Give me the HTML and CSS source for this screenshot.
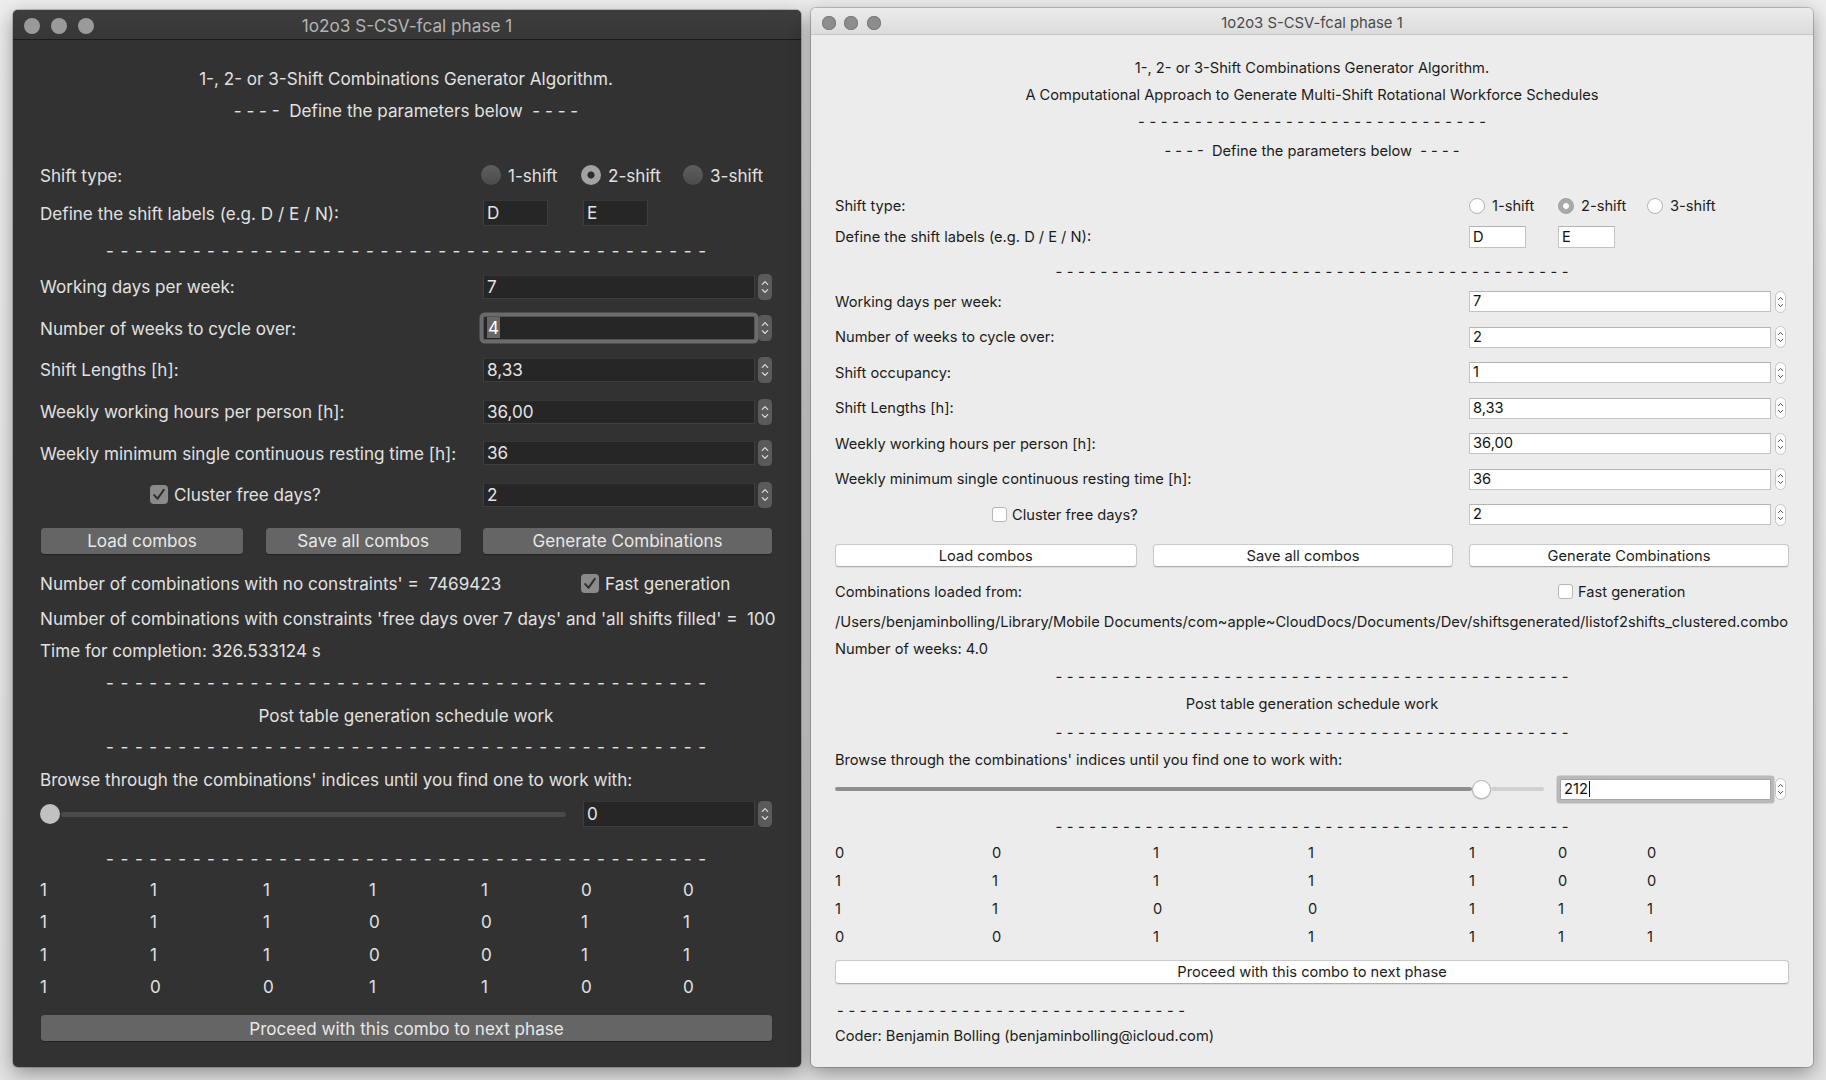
FILE: index.html
```html
<!DOCTYPE html>
<html>
<head>
<meta charset="utf-8">
<title>1o2o3 S-CSV-fcal phase 1</title>
<link rel="stylesheet" href="styles.css">
</head>
<body>
<svg class="defs" width="0" height="0" aria-hidden="true">
  <symbol id="step-dark" viewBox="0 0 14 26">
    <rect x="0" y="0" width="14" height="26" rx="4.5" fill="#5a5a5a"/>
    <path d="M4.3 10.4 L7 7.6 L9.7 10.4" fill="none" stroke="#d8d8d8" stroke-width="1.3" stroke-linecap="round" stroke-linejoin="round"/>
    <path d="M4.3 15.6 L7 18.4 L9.7 15.6" fill="none" stroke="#d8d8d8" stroke-width="1.3" stroke-linecap="round" stroke-linejoin="round"/>
  </symbol>
  <symbol id="step-light" viewBox="0 0 11 22">
    <rect x="0.5" y="0.5" width="10" height="21" rx="5" fill="#ffffff" stroke="#c4c4c4"/>
    <path d="M3.4 8.6 L5.5 6.4 L7.6 8.6" fill="none" stroke="#505050" stroke-width="1" stroke-linecap="round" stroke-linejoin="round"/>
    <path d="M3.4 13.4 L5.5 15.6 L7.6 13.4" fill="none" stroke="#505050" stroke-width="1" stroke-linecap="round" stroke-linejoin="round"/>
  </symbol>
  <symbol id="tick" viewBox="0 0 18 18">
    <path d="M4.2 9.6 L7.6 13.2 L13.8 4.4" fill="none" stroke="#2e2e2e" stroke-width="2" stroke-linecap="round" stroke-linejoin="round"/>
  </symbol>
</svg>

<div class="desktop">

  <!-- Dark window -->
  <section class="win dark">
    <header class="titlebar">
      <div class="lights"><span class="dot"></span><span class="dot"></span><span class="dot"></span></div>
      <div class="title">1o2o3 S-CSV-fcal phase 1</div>
      <div></div>
    </header>
    <div class="content">
      <div class="row center r-h1">1-, 2- or 3-Shift Combinations Generator Algorithm.</div>
      <div class="row center r-h2 pre">- - - -  Define the parameters below  - - - -</div>

      <div class="grid r-shift">
        <span class="lab">Shift type:</span>
        <label class="radio c5"><span class="rb"></span>1-shift</label>
        <label class="radio c6"><span class="rb on"></span>2-shift</label>
        <label class="radio c7"><span class="rb"></span>3-shift</label>
      </div>
      <div class="grid r-labels">
        <span class="lab">Define the shift labels (e.g. D / E / N):</span>
        <div class="field small c5">D</div>
        <div class="field small c6">E</div>
      </div>
      <div class="row center r-dash1"><span class="dashline">- - - - - - - - - - - - - - - - - - - - - - - - - - - - - - - - - - - - - - - - - -</span></div>

      <div class="grid spinrow"><span class="lab">Working days per week:</span><div class="spin"><div class="field">7</div><svg class="stepper"><use href="#step-dark"/></svg></div></div>
      <div class="grid spinrow"><span class="lab">Number of weeks to cycle over:</span><div class="spin"><div class="field focus"><span class="sel">4</span></div><svg class="stepper"><use href="#step-dark"/></svg></div></div>
      <div class="grid spinrow"><span class="lab">Shift Lengths [h]:</span><div class="spin"><div class="field">8,33</div><svg class="stepper"><use href="#step-dark"/></svg></div></div>
      <div class="grid spinrow"><span class="lab">Weekly working hours per person [h]:</span><div class="spin"><div class="field">36,00</div><svg class="stepper"><use href="#step-dark"/></svg></div></div>
      <div class="grid spinrow"><span class="lab">Weekly minimum single continuous resting time [h]:</span><div class="spin"><div class="field">36</div><svg class="stepper"><use href="#step-dark"/></svg></div></div>
      <div class="grid spinrow">
        <label class="check c2"><span class="cb on"><svg><use href="#tick"/></svg></span>Cluster free days?</label>
        <div class="spin"><div class="field">2</div><svg class="stepper"><use href="#step-dark"/></svg></div>
      </div>

      <div class="grid r-btns">
        <div class="btn b-load">Load combos</div>
        <div class="btn b-save">Save all combos</div>
        <div class="btn b-gen">Generate Combinations</div>
      </div>

      <div class="grid r-info1">
        <span class="lab pre">Number of combinations with no constraints' =  7469423</span>
        <label class="check c6"><span class="cb on"><svg><use href="#tick"/></svg></span>Fast generation</label>
      </div>
      <div class="row r-info2 pre">Number of combinations with constraints 'free days over 7 days' and 'all shifts filled' =  100</div>
      <div class="row r-info3">Time for completion: 326.533124 s</div>
      <div class="row center r-dash2"><span class="dashline">- - - - - - - - - - - - - - - - - - - - - - - - - - - - - - - - - - - - - - - - - -</span></div>
      <div class="row center r-post">Post table generation schedule work</div>
      <div class="row center r-dash3"><span class="dashline">- - - - - - - - - - - - - - - - - - - - - - - - - - - - - - - - - - - - - - - - - -</span></div>
      <div class="row r-browse">Browse through the combinations' indices until you find one to work with:</div>
      <div class="grid r-slider">
        <div class="slider"><span class="knob"></span><span class="track"></span></div>
        <div class="spin s67"><div class="field">0</div><svg class="stepper"><use href="#step-dark"/></svg></div>
      </div>
      <div class="row center r-dash4"><span class="dashline">- - - - - - - - - - - - - - - - - - - - - - - - - - - - - - - - - - - - - - - - - -</span></div>

      <div class="table">
        <div class="grid trow"><span>1</span><span>1</span><span>1</span><span>1</span><span>1</span><span>0</span><span>0</span></div>
        <div class="grid trow"><span>1</span><span>1</span><span>1</span><span>0</span><span>0</span><span>1</span><span>1</span></div>
        <div class="grid trow"><span>1</span><span>1</span><span>1</span><span>0</span><span>0</span><span>1</span><span>1</span></div>
        <div class="grid trow"><span>1</span><span>0</span><span>0</span><span>1</span><span>1</span><span>0</span><span>0</span></div>
      </div>

      <div class="btn b-proceed">Proceed with this combo to next phase</div>
    </div>
  </section>

  <!-- Light window -->
  <section class="win lightwin">
    <header class="titlebar">
      <div class="lights"><span class="dot"></span><span class="dot"></span><span class="dot"></span></div>
      <div class="title">1o2o3 S-CSV-fcal phase 1</div>
      <div></div>
    </header>
    <div class="content">
      <div class="row center r-h1">1-, 2- or 3-Shift Combinations Generator Algorithm.</div>
      <div class="row center r-h2">A Computational Approach to Generate Multi-Shift Rotational Workforce Schedules</div>
      <div class="row center r-dash0"><span class="dashline short">- - - - - - - - - - - - - - - - - - - - - - - - - - - - - - -</span></div>
      <div class="row center r-define pre">- - - -  Define the parameters below  - - - -</div>

      <div class="grid r-shift">
        <span class="lab">Shift type:</span>
        <label class="radio c5"><span class="rb"></span>1-shift</label>
        <label class="radio c6"><span class="rb on"></span>2-shift</label>
        <label class="radio c7"><span class="rb"></span>3-shift</label>
      </div>
      <div class="grid r-labels">
        <span class="lab">Define the shift labels (e.g. D / E / N):</span>
        <div class="field small c5">D</div>
        <div class="field small c6">E</div>
      </div>
      <div class="row center r-dash1"><span class="dashline">- - - - - - - - - - - - - - - - - - - - - - - - - - - - - - - - - - - - - - - - - - - - - -</span></div>

      <div class="grid spinrow"><span class="lab">Working days per week:</span><div class="spin"><div class="field">7</div><svg class="stepper"><use href="#step-light"/></svg></div></div>
      <div class="grid spinrow"><span class="lab">Number of weeks to cycle over:</span><div class="spin"><div class="field">2</div><svg class="stepper"><use href="#step-light"/></svg></div></div>
      <div class="grid spinrow"><span class="lab">Shift occupancy:</span><div class="spin"><div class="field">1</div><svg class="stepper"><use href="#step-light"/></svg></div></div>
      <div class="grid spinrow"><span class="lab">Shift Lengths [h]:</span><div class="spin"><div class="field">8,33</div><svg class="stepper"><use href="#step-light"/></svg></div></div>
      <div class="grid spinrow"><span class="lab">Weekly working hours per person [h]:</span><div class="spin"><div class="field">36,00</div><svg class="stepper"><use href="#step-light"/></svg></div></div>
      <div class="grid spinrow"><span class="lab">Weekly minimum single continuous resting time [h]:</span><div class="spin"><div class="field">36</div><svg class="stepper"><use href="#step-light"/></svg></div></div>
      <div class="grid spinrow">
        <label class="check c2"><span class="cb"></span>Cluster free days?</label>
        <div class="spin"><div class="field">2</div><svg class="stepper"><use href="#step-light"/></svg></div>
      </div>

      <div class="grid r-btns">
        <div class="btn b-load">Load combos</div>
        <div class="btn b-save">Save all combos</div>
        <div class="btn b-gen">Generate Combinations</div>
      </div>

      <div class="grid r-info1">
        <span class="lab">Combinations loaded from:</span>
        <label class="check c6"><span class="cb"></span>Fast generation</label>
      </div>
      <div class="row r-path">/Users/benjaminbolling/Library/Mobile Documents/com~apple~CloudDocs/Documents/Dev/shiftsgenerated/listof2shifts_clustered.combo</div>
      <div class="row r-weeks">Number of weeks: 4.0</div>
      <div class="row center r-dash2"><span class="dashline">- - - - - - - - - - - - - - - - - - - - - - - - - - - - - - - - - - - - - - - - - - - - - -</span></div>
      <div class="row center r-post">Post table generation schedule work</div>
      <div class="row center r-dash3"><span class="dashline">- - - - - - - - - - - - - - - - - - - - - - - - - - - - - - - - - - - - - - - - - - - - - -</span></div>
      <div class="row r-browse">Browse through the combinations' indices until you find one to work with:</div>
      <div class="grid r-slider">
        <div class="slider"><span class="fill"></span><span class="knob"></span><span class="track"></span></div>
        <div class="spin s67"><div class="field focus">212<span class="caret"></span></div><svg class="stepper"><use href="#step-light"/></svg></div>
      </div>
      <div class="row center r-dash4"><span class="dashline">- - - - - - - - - - - - - - - - - - - - - - - - - - - - - - - - - - - - - - - - - - - - - -</span></div>

      <div class="table">
        <div class="grid trow"><span>0</span><span>0</span><span>1</span><span>1</span><span>1</span><span>0</span><span>0</span></div>
        <div class="grid trow"><span>1</span><span>1</span><span>1</span><span>1</span><span>1</span><span>0</span><span>0</span></div>
        <div class="grid trow"><span>1</span><span>1</span><span>0</span><span>0</span><span>1</span><span>1</span><span>1</span></div>
        <div class="grid trow"><span>0</span><span>0</span><span>1</span><span>1</span><span>1</span><span>1</span><span>1</span></div>
      </div>

      <div class="btn b-proceed">Proceed with this combo to next phase</div>
      <div class="row r-dash5"><span class="dashline short">- - - - - - - - - - - - - - - - - - - - - - - - - - - - - - -</span></div>
      <div class="row r-coder">Coder: Benjamin Bolling (benjaminbolling@icloud.com)</div>
    </div>
  </section>

</div>
</body>
</html>
```

FILE: styles.css
```css
* { box-sizing: border-box; }
html, body { margin: 0; padding: 0; }
body {
  width: 1826px;
  height: 1080px;
  overflow: hidden;
  background: linear-gradient(#ededed, #e3e3e3);
  font-family: Inter, "Noto Sans", "Liberation Sans", sans-serif;
}
.defs { position: absolute; width: 0; height: 0; overflow: hidden; }

.desktop {
  display: flex;
  align-items: flex-start;
  padding: 10px 0 0 13px;
  gap: 10px;
}

.win {
  display: flex;
  flex-direction: column;
  border-radius: 5px;
  overflow: hidden;
  box-shadow: 0 6px 20px rgba(0, 0, 0, 0.38), 0 0 0 1px rgba(0, 0, 0, 0.18);
}

.titlebar {
  display: grid;
  grid-template-columns: 1fr auto 1fr;
  align-items: center;
  flex: none;
  padding-top: 2px;
}
.lights { display: flex; align-items: center; }
.dot { display: block; border-radius: 50%; }

.content { display: flex; flex-direction: column; }
.row { display: flex; align-items: center; white-space: nowrap; }
.center { justify-content: center; }
.pre { white-space: pre; }
.grid { display: grid; grid-template-columns: var(--cols); align-items: center; white-space: nowrap; }

.lab { grid-column: 1 / 5; }
.c2 { grid-column: 2 / 5; }
.c5 { grid-column: 5; }
.c6 { grid-column: 6; }
.c7 { grid-column: 7; }

.spin { grid-column: 5 / 8; display: flex; align-items: center; }
.spin.s67 { grid-column: 6 / 8; }
.field { flex: 1; }
.stepper { flex: none; display: block; }

.dashline {
  display: block;
  text-align: justify;
  text-align-last: justify;
  white-space: normal;
}

.radio, .check { display: flex; align-items: center; }
.rb, .cb { flex: none; display: block; }
.cb svg { display: block; width: 100%; height: 100%; }

.slider { grid-column: 1 / 6; display: flex; align-items: center; }
.track { flex: 1; display: block; }
.knob, .fill { display: block; flex: none; }

.btn { display: flex; align-items: center; justify-content: center; white-space: nowrap; }

/* ================= DARK WINDOW ================= */
.dark {
  width: 788px;
  height: 1057px;
  background: #323232;
  color: #e1e1e1;
  font-size: 17.1px;
}
.dark .titlebar {
  height: 30px;
  background: linear-gradient(#3e3e3e, #363636);
  border-bottom: 1px solid #1b1b1b;
}
.dark .lights { gap: 11px; padding-left: 11px; }
.dark .dot { width: 16px; height: 16px; background: #9a9a9a; }
.dark .title { color: #b3b3b3; font-size: 17.2px; }

.dark .content {
  --cols: 110px 113px 106px 112px 100px 102px 89px;
  padding: 22px 29px 0 27px;
}
.dark .r-h1 { height: 32px; }
.dark .r-h2 { height: 33px; margin-bottom: 28px; }
.dark .r-shift { height: 40px; }
.dark .r-labels { height: 36px; }
.dark .r-dash1 { height: 35px; padding-top: 3px; }
.dark .spinrow { height: 41.6px; }
.dark .r-btns { height: 26.5px; margin-top: 12px; margin-bottom: 12px; }
.dark .r-info1 { height: 34px; }
.dark .r-info2 { height: 36px; }
.dark .r-info3 { height: 28px; }
.dark .r-dash2 { height: 36px; }
.dark .r-post { height: 30px; }
.dark .r-dash3 { height: 32px; }
.dark .r-browse { height: 34px; }
.dark .r-slider { height: 36px; }
.dark .r-dash4 { height: 41.5px; padding-top: 10.5px; }
.dark .trow { height: 32.2px; }
.dark .b-proceed { height: 26px; margin: 12.7px 0 0 1px; }

.dark .dashline { width: 600px; }

.dark .field {
  height: 24px;
  margin-left: 2px;
  background: #262626;
  border: 1px solid #3e3e3e;
  border-top-color: #363636;
  padding: 0 3px;
  line-height: 22px;
  color: #e4e4e4;
}
.dark .field.small { flex: none; width: 65px; height: 26px; line-height: 24px; }
.dark .field.focus {
  box-shadow: 0 0 0 3.5px #6b6b6b;
  border-radius: 2px;
  border-color: #555;
}
.dark .sel { background: #676767; color: #fff; padding: 0 1px; }
.dark .spin { gap: 3px; }
.dark .stepper { width: 14px; height: 26px; }

.dark .radio { gap: 7px; }
.dark .rb {
  width: 20px; height: 20px; border-radius: 50%;
  background: linear-gradient(#5f5f5f, #4b4b4b);
}
.dark .rb.on {
  background: radial-gradient(circle, #2d2d2d 0 3.2px, #a2a2a2 3.9px);
}
.dark .check { gap: 6px; }
.dark .cb {
  width: 18px; height: 19px; border-radius: 4px;
  background: #8a8a8a;
}

.dark .btn {
  background: #656565;
  color: #e8e8e8;
  border-radius: 3.5px;
  box-shadow: 0 1px 1px rgba(0, 0, 0, 0.35);
}
.dark .r-btns .btn { height: 26.5px; }
.dark .b-load { grid-column: 1 / 3; margin: 0 20px 0 1px; }
.dark .b-save { grid-column: 3 / 5; margin: 0 20px 0 2.5px; }
.dark .b-gen { grid-column: 5 / 8; margin-left: 2px; }

.dark .slider { margin-right: 15px; }
.dark .knob { width: 20px; height: 20px; border-radius: 50%; background: #c1c1c1; }
.dark .track { height: 5px; border-radius: 3px; background: #4a4a4a; margin-left: 1px; }
.dark .r-slider .field { margin-left: 2px; height: 26px; line-height: 24px; }

/* ================= LIGHT WINDOW ================= */
.lightwin {
  width: 1002px;
  height: 1059px;
  margin-top: -2px;
  background: #ececec;
  color: #1c1c1c;
  font-size: 14.65px;
}
.lightwin .titlebar {
  height: 27px;
  background: linear-gradient(#ebebeb, #dcdcdc);
  border-bottom: 1px solid #c6c6c6;
  padding-top: 3px;
}
.lightwin .lights { gap: 8.5px; padding-left: 10.5px; }
.lightwin .dot {
  width: 14px; height: 14px;
  background: #8d8d8f;
  box-shadow: inset 0 0 0 1px #7b7b7d;
}
.lightwin .title { color: #4a4a4a; font-size: 14.8px; }

.lightwin .content {
  --cols: 157px 161px 155px 161px 89px 89px 142px;
  padding: 19.5px 24px 0 24px;
}
.lightwin .r-h1 { height: 27px; }
.lightwin .r-h2 { height: 27px; }
.lightwin .r-dash0 { height: 26px; }
.lightwin .r-define { height: 32px; margin-bottom: 22px; }
.lightwin .r-shift { height: 34px; }
.lightwin .r-labels { height: 29px; }
.lightwin .r-dash1 { height: 32.65px; padding-top: 7.4px; }
.lightwin .spinrow { height: 35.5px; }
.lightwin .r-btns { height: 23.4px; margin-top: 11.45px; margin-bottom: 8px; }
.lightwin .r-info1 { height: 33px; }
.lightwin .r-path { height: 27px; }
.lightwin .r-weeks { height: 27px; }
.lightwin .r-dash2 { height: 28px; padding-top: 1.5px; }
.lightwin .r-post { height: 28px; }
.lightwin .r-dash3 { height: 28px; padding-top: 1.5px; }
.lightwin .r-browse { height: 26.5px; }
.lightwin .r-slider { height: 33px; }
.lightwin .r-dash4 { height: 33.65px; padding-top: 8px; }
.lightwin .trow { height: 27.7px; }
.lightwin .b-proceed { height: 24.5px; margin-top: 9.5px; }
.lightwin .r-dash5 { height: 37px; margin-top: 7px; padding-top: 2px; }
.lightwin .r-coder { height: 16px; }

.lightwin .dashline { width: 513px; }
.lightwin .dashline.short { width: 348px; }
.lightwin .r-dash5 .dashline { margin-left: 2px; }

.lightwin .field {
  height: 21px;
  background: #ffffff;
  border: 1px solid #c4c4c4;
  border-top-color: #b4b4b4;
  padding: 0 3px;
  line-height: 19px;
  color: #111;
}
.lightwin .field.small { flex: none; width: 57px; height: 22.5px; line-height: 20.5px; }
.lightwin .field.focus {
  box-shadow: 0 0 0 3.5px #b9b9b9;
  border-radius: 1px;
  border-color: #a5a5a5;
  height: 21px;
}
.lightwin .caret { display: inline-block; width: 1px; height: 16px; background: #111; vertical-align: -3px; margin-left: 1px; }
.lightwin .spin { gap: 4px; padding-right: 3px; }
.lightwin .stepper { width: 11px; height: 22px; }

.lightwin .radio { gap: 7px; }
.lightwin .rb {
  width: 16px; height: 16px; border-radius: 50%;
  background: #ffffff;
  border: 1px solid #b4b4b4;
}
.lightwin .rb.on {
  background: radial-gradient(circle, #ffffff 0 2.6px, #a9a9a9 3.2px);
  border-color: #9f9f9f;
}
.lightwin .check { gap: 5px; }
.lightwin .cb {
  width: 15px; height: 15px; border-radius: 3px;
  background: #ffffff;
  border: 1px solid #b6b6b6;
}

.lightwin .btn {
  background: #ffffff;
  color: #1c1c1c;
  border: 1px solid #c9c9c9;
  border-bottom-color: #adadad;
  border-radius: 4px;
  box-shadow: 0 1px 1px rgba(0, 0, 0, 0.08);
}
.lightwin .r-btns .btn { height: 23.4px; }
.lightwin .b-load { grid-column: 1 / 3; margin-right: 16.5px; }
.lightwin .b-save { grid-column: 3 / 5; margin-right: 16px; }
.lightwin .b-gen { grid-column: 5 / 8; }

.lightwin .slider { margin-right: 14px; }
.lightwin .fill { width: 637px; height: 4px; border-radius: 2px; background: #8e8e8e; }
.lightwin .knob {
  width: 19px; height: 19px; border-radius: 50%;
  background: #ffffff;
  border: 1px solid #b4b4b4;
  box-shadow: 0 1px 1px rgba(0, 0, 0, 0.15);
}
.lightwin .track { height: 4px; border-radius: 2px; background: #d0d0d0; }
.lightwin .r-slider .field { margin-left: 2px; }
```
